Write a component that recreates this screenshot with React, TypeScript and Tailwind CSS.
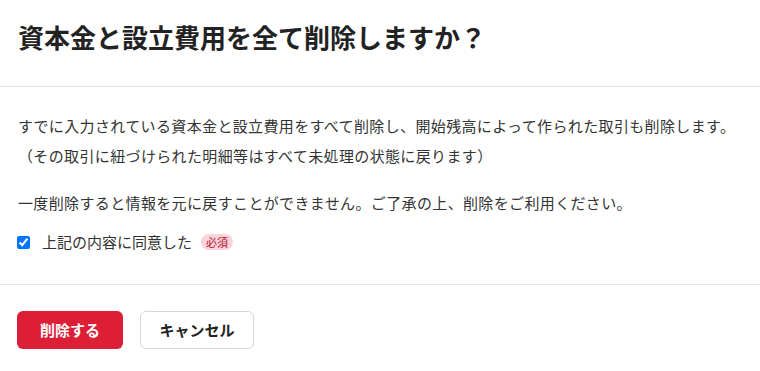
import { useState } from "react";

const FONT = "font-['Noto_Sans_CJK_JP','Noto_Sans',sans-serif]";

export default function App() {
  const [agreed, setAgreed] = useState(true);

  return (
    <div className={`w-[760px] min-h-[371px] bg-white text-[#333] ${FONT}`}>

      {/* Header */}
      <div className="px-[18px] pt-[18px] pb-[30px] border-b border-[#e6e6e6]">
        <h1 className="text-[26px] leading-[38px] font-bold text-[#222]">資本金と設立費用を全て削除しますか？</h1>
      </div>

      {/* Body */}
      <div className="px-[18px] pt-[24px] pb-[27px] text-[15px] leading-[30px] tracking-[0.36px]">
        <p>すでに入力されている資本金と設立費用をすべて削除し、開始残高によって作られた取引も削除します。</p>
        <p>（その取引に紐づけられた明細等はすべて未処理の状態に戻ります）</p>
        <p className="mt-[17px]">一度削除すると情報を元に戻すことができません。ご了承の上、削除をご利用ください。</p>
        <label className="mt-[9px] flex items-center h-[30px] cursor-pointer">
          <input type="checkbox" checked={agreed} onChange={e => setAgreed(e.target.checked)}
            className="w-[13px] h-[13px] ml-[-1px] mr-[12px] accent-[#0075ff]" />
          <span className="tracking-normal">上記の内容に同意した</span>
          <span className="ml-[9px] rounded-full bg-[#fbd3da] px-[5px] text-[11px] leading-[16px] tracking-normal text-[#b4122e]">必須</span>
        </label>
      </div>

      {/* Footer */}
      <div className="flex items-center gap-[17px] px-[17px] pt-[26px] pb-[26px] border-t border-[#e6e6e6]">
        <button disabled={!agreed}
          className="h-[38px] px-[23px] rounded-[6px] bg-[#dc1f37] text-white text-[15px] font-bold disabled:opacity-50">
          削除する
        </button>
        <button className="h-[38px] px-[18px] w-[114px] rounded-[6px] border border-[#d6d6d6] bg-white text-[#222] text-[15px] font-bold">
          キャンセル
        </button>
      </div>
    </div>
  );
}
